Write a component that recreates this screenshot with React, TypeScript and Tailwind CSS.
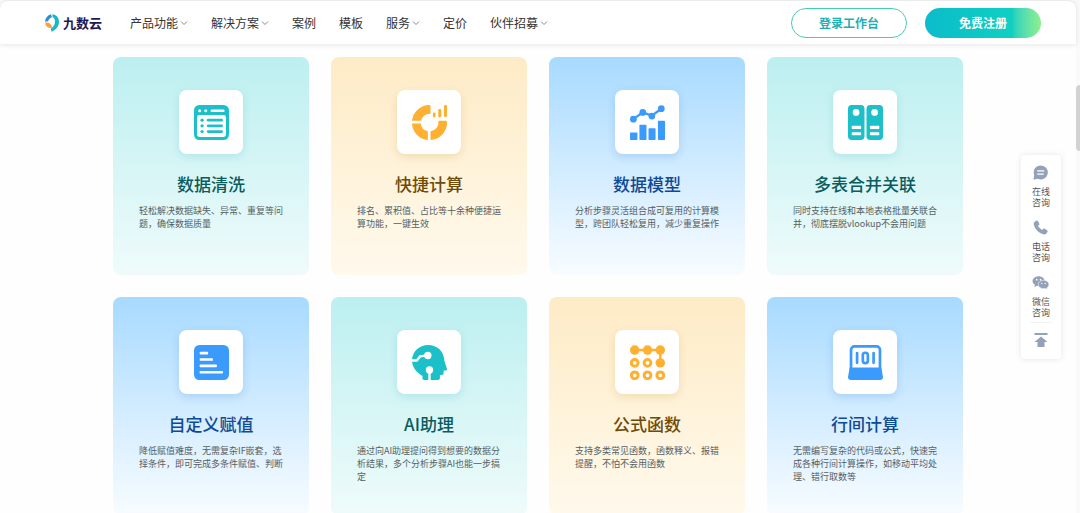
import React from 'react';
import clsx from 'clsx';

type Tone = 'teal' | 'amber' | 'blue';

interface Feature {
  title: string;
  text: string;
  tone: Tone;
  icon: React.ReactNode;
}

const tones: Record<Tone, { card: string; title: string; icon: string; tile: string }> = {
  teal: {
    card: 'from-[#bceff0] to-[#effbfb]',
    title: 'text-[#0a5c5e]',
    icon: 'text-[#1bc0c8]',
    tile: 'shadow-[0_3px_8px_rgba(30,170,180,0.18)]',
  },
  amber: {
    card: 'from-[#feebc6] to-[#fff9ec]',
    title: 'text-[#6f4a08]',
    icon: 'text-[#ffb030]',
    tile: 'shadow-[0_3px_8px_rgba(190,140,30,0.2)]',
  },
  blue: {
    card: 'from-[#a7daff] to-[#f8fcff]',
    title: 'text-[#0f4a94]',
    icon: 'text-[#3b9bfc]',
    tile: 'shadow-[0_3px_8px_rgba(40,110,200,0.2)]',
  },
};

const CleanIcon = () => (
  <>
    <rect width="104" height="104" rx="16" fill="currentColor" />
    <rect x="9" y="30" width="86" height="65" rx="7" fill="white" />
    <g fill="white">
      <circle cx="17" cy="17" r="4.5" />
      <circle cx="35" cy="17" r="4.5" />
      <rect x="49" y="13" width="42" height="8" rx="4" />
    </g>
    <g fill="currentColor">
      <circle cx="24" cy="45" r="5" />
      <circle cx="24" cy="62" r="5" />
      <circle cx="24" cy="79" r="5" />
      <rect x="38" y="41" width="48" height="8" rx="4" />
      <rect x="38" y="58" width="48" height="8" rx="4" />
      <rect x="38" y="75" width="48" height="8" rx="4" />
    </g>
  </>
);

const DonutIcon = () => (
  <g fill="currentColor">
    <path d="M0 47A52 52 0 0 1 51 0Q55 0 55 4V26A26 26 0 0 0 27 47Z" />
    <path d="M0 55H26A26 26 0 0 0 47 78V104A52 52 0 0 1 0 55Z" />
    <path d="M55 104V78A26 26 0 0 0 78 47H100Q104 47 104 51A52 52 0 0 1 55 104Z" />
    <rect x="62" y="22" width="8" height="15" rx="4" />
    <rect x="78" y="12" width="9" height="25" rx="4" />
    <rect x="95" y="0" width="9" height="36" rx="4" />
  </g>
);

const ModelIcon = () => (
  <g fill="currentColor">
    <path d="M10 42L38 22L65 32L93 11" fill="none" stroke="currentColor" strokeWidth="7" />
    <circle cx="10" cy="42" r="10" />
    <circle cx="38" cy="22" r="10" />
    <circle cx="65" cy="33" r="10" />
    <circle cx="93" cy="11" r="10" />
    <rect x="0" y="82" width="22" height="22" rx="2" />
    <rect x="28" y="59" width="21" height="45" rx="2" />
    <rect x="55" y="69" width="21" height="35" rx="2" />
    <rect x="83" y="47" width="21" height="57" rx="2" />
  </g>
);

const MergeIcon = () => (
  <>
    <rect width="49" height="104" rx="11" fill="currentColor" />
    <rect x="55" width="49" height="104" rx="11" fill="currentColor" />
    <g fill="white">
      <circle cx="24" cy="22" r="10" />
      <circle cx="79" cy="22" r="10" />
      <rect x="11" y="62" width="28" height="9" rx="2" />
      <rect x="11" y="81" width="28" height="9" rx="2" />
      <rect x="65" y="62" width="28" height="9" rx="2" />
      <rect x="65" y="81" width="28" height="9" rx="2" />
    </g>
  </>
);

const AssignIcon = () => (
  <>
    <rect width="104" height="104" rx="16" fill="currentColor" />
    <g fill="white">
      <rect x="17" y="20" width="25" height="8" rx="2" />
      <rect x="17" y="39" width="39" height="8" rx="2" />
      <rect x="17" y="58" width="51" height="8" rx="2" />
      <rect x="17" y="77" width="69" height="8" rx="2" />
    </g>
  </>
);

const AssistantIcon = () => (
  <>
    <path
      d="M0 46C1 19 22 0 48 0C75 0 95 19 96 46L104 71Q105 76 100 76H94V84Q94 89 89 89H83V98Q83 104 77 104H36Q31 104 31 99V92C14 82 0 66 0 46Z"
      fill="currentColor"
    />
    <path d="M-2 46H14L24 34L46 31M52 74V106" fill="none" stroke="white" strokeWidth="7" />
    <circle cx="47" cy="31" r="11" fill="white" />
    <circle cx="52" cy="74" r="11" fill="white" />
  </>
);

const FormulaIcon = () => (
  <>
    <path d="M14 15H90V52" fill="none" stroke="currentColor" strokeWidth="7" />
    <g fill="currentColor">
      <circle cx="14" cy="15" r="14" />
      <circle cx="52" cy="15" r="14" />
      <circle cx="90" cy="15" r="14" />
      <circle cx="90" cy="53" r="14" />
    </g>
    <g fill="none" stroke="currentColor" strokeWidth="9">
      <circle cx="14" cy="53" r="10" />
      <circle cx="52" cy="53" r="10" />
      <circle cx="14" cy="90" r="10" />
      <circle cx="52" cy="90" r="10" />
      <circle cx="90" cy="90" r="10" />
    </g>
  </>
);

const LaptopIcon = () => (
  <>
    <rect x="9" y="4" width="86" height="80" rx="10" fill="none" stroke="currentColor" strokeWidth="8" />
    <path d="M5 67H99L104 95Q104 104 95 104H9Q0 104 0 95Z" fill="currentColor" />
    <g fill="none" stroke="currentColor" strokeWidth="8" strokeLinecap="round">
      <line x1="27" y1="24" x2="27" y2="53" />
      <rect x="44" y="23" width="15" height="31" rx="7" />
      <line x1="76" y1="24" x2="76" y2="53" />
    </g>
  </>
);

const features: Feature[] = [
  { title: '数据清洗', text: '轻松解决数据缺失、异常、重复等问题，确保数据质量', tone: 'teal', icon: <CleanIcon /> },
  { title: '快捷计算', text: '排名、累积值、占比等十余种便捷运算功能，一键生效', tone: 'amber', icon: <DonutIcon /> },
  { title: '数据模型', text: '分析步骤灵活组合成可复用的计算模型，跨团队轻松复用，减少重复操作', tone: 'blue', icon: <ModelIcon /> },
  { title: '多表合并关联', text: '同时支持在线和本地表格批量关联合并，彻底摆脱vlookup不会用问题', tone: 'teal', icon: <MergeIcon /> },
  { title: '自定义赋值', text: '降低赋值难度，无需复杂IF嵌套，选择条件，即可完成多条件赋值、判断', tone: 'blue', icon: <AssignIcon /> },
  { title: 'AI助理', text: '通过向AI助理提问得到想要的数据分析结果，多个分析步骤AI也能一步搞定', tone: 'teal', icon: <AssistantIcon /> },
  { title: '公式函数', text: '支持多类常见函数，函数释义、报错提醒，不怕不会用函数', tone: 'amber', icon: <FormulaIcon /> },
  { title: '行间计算', text: '无需编写复杂的代码或公式，快速完成各种行间计算操作，如移动平均处理、错行取数等', tone: 'blue', icon: <LaptopIcon /> },
];

const navItems = [
  { label: '产品功能', menu: true },
  { label: '解决方案', menu: true },
  { label: '案例', menu: false },
  { label: '模板', menu: false },
  { label: '服务', menu: true },
  { label: '定价', menu: false },
  { label: '伙伴招募', menu: true },
];

const contacts = [
  {
    lines: ['在线', '咨询'],
    icon: (
      <>
        <path d="M8.300 0.500a7.500 7.500 0 1 1-3.300 14.200L1 15.500a.5.5 0 0 1-.5-.7L1.300 11A7.500 7.500 0 0 1 8.300.5Z" fill="currentColor" />
        <path d="M5 6.300h6.500M5 9.700h6" stroke="white" strokeWidth="1.300" strokeLinecap="round" />
      </>
    ),
  },
  {
    lines: ['电话', '咨询'],
    icon: (
      <path
        d="M1.500 2 3.400.7c.6-.4 1.400-.3 1.800.3l1.500 2.600c.4.6.2 1.300-.3 1.700l-1.100.9c.9 1.800 2.400 3.400 4.400 4.500l1.100-1.100c.5-.5 1.200-.5 1.700-.2l2.500 1.600c.6.4.8 1.200.3 1.800l-1.300 1.800c-.4.6-1.200 1-2 .9C6.300 14.500 1.300 9.200.7 3.800c-.1-.7.200-1.400.8-1.800Z"
        fill="currentColor"
      />
    ),
  },
  {
    lines: ['微信', '咨询'],
    icon: (
      <>
        <path d="M6 1.200c3.600 0 6.500 2.300 6.500 5.300s-2.900 5.300-6.500 5.300c-.7 0-1.300-.1-1.900-.3L1.500 13l.5-2.500C.5 9.600-.5 8.200-.5 6.500c0-3 2.900-5.300 6.500-5.300Z" fill="currentColor" />
        <path d="M11.300 5.600c3.200 0 5.700 2 5.700 4.500 0 1.400-.8 2.700-2.100 3.500l.4 1.700-2-1c-.6.200-1.300.3-2 .3-3.200 0-5.700-2-5.700-4.500s2.500-4.500 5.700-4.500Z" fill="currentColor" stroke="white" strokeWidth="0.600" />
        <g fill="white">
          <circle cx="4" cy="5" r=".9" />
          <circle cx="8" cy="5" r=".9" />
          <circle cx="9.500" cy="9" r=".7" />
          <circle cx="13" cy="9" r=".7" />
        </g>
      </>
    ),
  },
];

const Caret = () => (
  <svg viewBox="0 0 8 8" className="h-2 w-2" fill="none" stroke="#888" aria-hidden="true">
    <path d="M1 2.500L4 5.500L7 2.500" />
  </svg>
);

const Header = () => (
  <header className="relative z-10 flex h-11 shrink-0 items-center rounded-t-lg border-t border-[#ececec] bg-white pr-[35px] pl-[45px] shadow-[0_1px_5px_rgba(0,0,0,0.1)]">
    <a href="#" className="mr-7 flex items-center gap-1">
      <svg viewBox="0 0 42 52" className="h-[18px] w-[14px]" aria-hidden="true">
        <path d="M0 22C1 11 8 3 18 0L21 9C15 11 12 14 9 21Z" fill="#2c8fd3" />
        <path d="M22 0C34 1 42 10 42 22C42 36 33 46 20 52L17 44C27 36 31 28 30 20C29 14 27 11 23 9Z" fill="#17b9c6" />
        <path d="M1 25C10 23 21 29 21 41C10 42 1 36 1 25Z" fill="#f9a13a" />
      </svg>
      <span className="text-[13px] leading-none font-bold text-[#1d1852]">九数云</span>
    </a>
    <nav className="flex items-center gap-[23px]">
      {navItems.map((item) => (
        <a key={item.label} href="#" className="flex items-center gap-0.5 text-xs whitespace-nowrap text-[#333]">
          {item.label}
          {item.menu && <Caret />}
        </a>
      ))}
    </nav>
    <div className="ml-auto flex gap-[18px]">
      <button className="h-[30px] w-[116px] rounded-full border border-[#45cdb4] text-xs font-bold text-[#1fb0b4]">
        登录工作台
      </button>
      <button className="h-[30px] w-[116px] rounded-full bg-linear-to-r from-[#0cbccb] via-[#0fd0c0] via-75% to-[#8df08c] text-xs font-bold text-white">
        免费注册
      </button>
    </div>
  </header>
);

const FeatureCard = ({ title, text, tone, icon }: Feature) => {
  const t = tones[tone];
  return (
    <article className={clsx('flex min-h-[218px] flex-col items-center rounded-lg bg-linear-to-b px-[25px] pt-[33px]', t.card)}>
      <div className={clsx('flex h-16 w-16 items-center justify-center rounded-lg bg-white', t.tile)}>
        <svg viewBox="0 0 104 104" className={clsx('h-[35px] w-[35px]', t.icon)} aria-hidden="true">
          {icon}
        </svg>
      </div>
      <h3 className={clsx('mt-[18px] text-[17px] leading-6 font-medium', t.title)}>{title}</h3>
      <p className="mt-2 w-full pl-px text-[9px] leading-[13px] text-[#556063]">{text}</p>
    </article>
  );
};

const ContactBar = () => (
  <aside className="absolute top-[155px] right-[19px] z-10 flex w-10 flex-col items-center rounded bg-white pt-[10px] pb-3 shadow-[0_0_6px_rgba(0,0,0,0.1)]">
    <div className="flex flex-col gap-3">
      {contacts.map((c) => (
        <button key={c.lines[0]} className="flex flex-col items-center gap-[6px] text-[9px] leading-[11px] text-[#555]">
          <svg viewBox="0 0 16 16" className="h-[15px] w-[15px] overflow-visible text-[#93a2b9]" aria-hidden="true">
            {c.icon}
          </svg>
          <span>
            {c.lines[0]}
            <br />
            {c.lines[1]}
          </span>
        </button>
      ))}
    </div>
    <button aria-label="返回顶部" className="mt-1 border-t border-[#f0f2f5] px-1 pt-[10px] text-[#93a2b9]">
      <svg viewBox="0 0 14 14" className="h-[14px] w-[14px]" aria-hidden="true">
        <path d="M.5 0h13v2H.5ZM7 3.500l6.500 5.500h-3v5h-7V9h-3Z" fill="currentColor" />
      </svg>
    </button>
  </aside>
);

export default function App() {
  return (
    <div
      lang="zh-CN"
      className="relative flex h-screen overflow-hidden bg-[#fafafa] font-['Noto_Sans_CJK_SC',sans-serif]"
    >
      <div className="flex min-w-0 flex-1 flex-col">
        <Header />
        <main className="flex-1 overflow-hidden bg-[#fefefe] px-6 pt-[13px]">
          <section className="mx-auto grid max-w-[850px] grid-cols-4 gap-[22px]">
            {features.map((f) => (
              <FeatureCard key={f.title} {...f} />
            ))}
          </section>
        </main>
      </div>

      {/* Scroll track */}
      <div className="w-1 shrink-0 pt-[85px]">
        <div className="h-[66px] rounded-l bg-[#d2d2d2]" />
      </div>

      <ContactBar />
    </div>
  );
}
